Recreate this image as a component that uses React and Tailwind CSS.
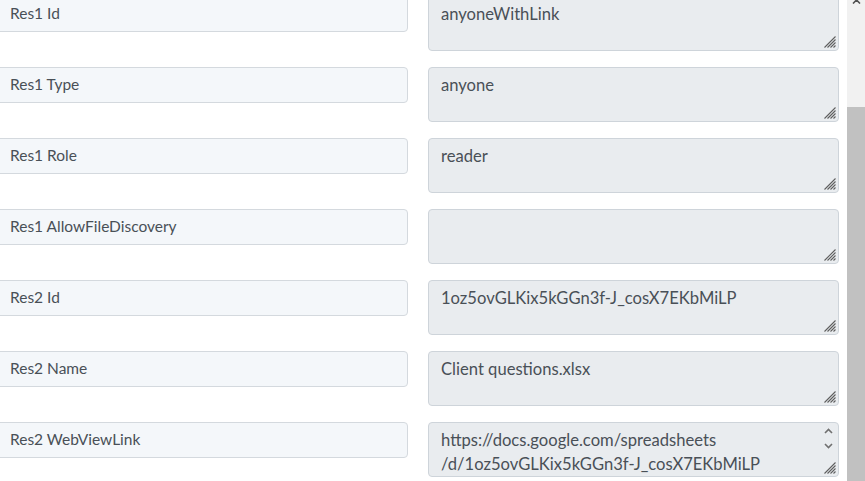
const rows = [
  { label: 'Res1 Id', value: 'anyoneWithLink' },
  { label: 'Res1 Type', value: 'anyone' },
  { label: 'Res1 Role', value: 'reader' },
  { label: 'Res1 AllowFileDiscovery', value: '' },
  { label: 'Res2 Id', value: '1oz5ovGLKix5kGGn3f-J_cosX7EKbMiLP' },
  { label: 'Res2 Name', value: 'Client questions.xlsx' },
  {
    label: 'Res2 WebViewLink',
    value: 'https://docs.google.com/spreadsheets\n/d/1oz5ovGLKix5kGGn3f-J_cosX7EKbMiLP',
    scroll: true,
  },
]

// textarea resize handle
const Grip = () => (
  <svg className="absolute right-[2px] bottom-[2px]" width="13" height="13" viewBox="0 0 13 13">
    <path d="M12.5 1.5L1.5 12.5M12.5 4.5L4.5 12.5M12.5 7.5L7.5 12.5M12.5 10.5L10.5 12.5" stroke="#5f5f5f" strokeWidth="1.1" fill="none" />
  </svg>
)

const Field = ({ label, value, scroll }) => (
  <div className="flex items-start gap-[20px]">
    <div className="w-[418px] h-[36px] flex items-center pl-[19px] bg-[#f4f7fa] border border-[#d4d9de] rounded-[4px] text-[#495057] text-[15.5px]">
      {label}
    </div>
    <div className="relative w-[411px] h-[55px] bg-[#e9ecef] border border-[#ced4da] rounded-[4px] pl-[12px] pr-[28px] pt-[5px] text-[#495057] text-[16.6px] leading-[24px] whitespace-pre overflow-hidden">
      {value}
      {scroll && (
        <div className="absolute right-[5px] top-[5px] flex flex-col items-center gap-[9px]">
          <svg width="9" height="6" viewBox="0 0 9 6">
            <path d="M1 5L4.5 1.5L8 5" stroke="#707070" strokeWidth="1.6" fill="none" />
          </svg>
          <svg width="9" height="6" viewBox="0 0 9 6">
            <path d="M1 1L4.5 4.5L8 1" stroke="#707070" strokeWidth="1.6" fill="none" />
          </svg>
        </div>
      )}
      <Grip />
    </div>
  </div>
)

export default function App() {
  return (
    <div className="h-[481px] w-[865px] overflow-hidden bg-white flex font-['Lato','Liberation_Sans',sans-serif]">
      <div className="flex-1 -ml-[10px] -mt-[4px] flex flex-col gap-[16px]">
        {rows.map((r) => (
          <Field key={r.label} {...r} />
        ))}
      </div>
      <div className="w-[18px] h-full bg-[#f1f1f1] flex flex-col">
        <div className="h-[107px] flex justify-center">
          <svg width="9" height="5" viewBox="0 0 9 5" className="-mt-[1px]">
            <path d="M1 4.5L4.5 1L8 4.5" stroke="#505050" strokeWidth="1.6" fill="none" />
          </svg>
        </div>
        <div className="flex-1 bg-[#c1c1c1]" />
      </div>
    </div>
  )
}
